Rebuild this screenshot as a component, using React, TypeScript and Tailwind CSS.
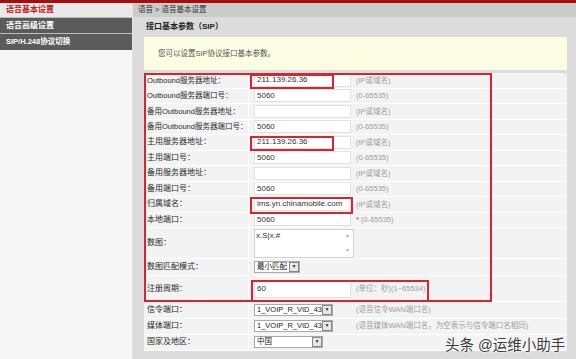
import React from "react";

type Row = {
    label: string;
    value?: string;
    hint?: React.ReactNode;
    kind?: "input" | "textarea" | "select" | "period";
    selectText?: string;
    selectW?: string;
    h: string;
};

const ROWS: Row[] = [
    { label: "Outbound服务器地址：", value: "211.139.26.36", hint: "(IP或域名)", h: "h-[15.5px]" },
    { label: "Outbound服务器端口号：", value: "5060", hint: "(0-65535)", h: "h-[15.5px]" },
    { label: "备用Outbound服务器地址：", value: "", hint: "(IP或域名)", h: "h-[15.5px]" },
    { label: "备用Outbound服务器端口号：", value: "5060", hint: "(0-65535)", h: "h-[15.5px]" },
    { label: "主用服务器地址：", value: "211.139.26.36", hint: "(IP或域名)", h: "h-[15.5px]" },
    { label: "主用端口号：", value: "5060", hint: "(0-65535)", h: "h-[15.5px]" },
    { label: "备用服务器地址：", value: "", hint: "(IP或域名)", h: "h-[15.5px]" },
    { label: "备用端口号：", value: "5060", hint: "(0-65535)", h: "h-[15.5px]" },
    { label: "归属域名：", value: "ims.yn.chinamobile.com", hint: "(IP或域名)", h: "h-[15.5px]" },
    {
        label: "本地端口：",
        value: "5060",
        hint: (
            <>
                <span className="text-[#d33]">*</span> (0-65535)
            </>
        ),
        h: "h-[15.5px]",
    },
    { label: "数图：", kind: "textarea", h: "h-[31px]" },
    { label: "数图匹配模式：", kind: "select", selectText: "最小匹配", selectW: "w-[46px]", h: "h-[17px]" },
    { label: "注册周期：", kind: "period", value: "60", hint: "(单位：秒)(1~65534)", h: "h-[26px]" },
    { label: "信令端口：", kind: "select", selectText: "1_VOIP_R_VID_43", selectW: "w-[79px]", hint: "(语音信令WAN端口名)", h: "h-[16.5px]" },
    {
        label: "媒体端口：",
        kind: "select",
        selectText: "1_VOIP_R_VID_43",
        selectW: "w-[79px]",
        hint: "(语音媒体WAN端口名，为空表示与信令端口名相同)",
        h: "h-[16px]",
    },
    { label: "国家及地区：", kind: "select", selectText: "中国", selectW: "w-[69px]", h: "h-[16px]" },
];

function Select({ text, w }: { text: string; w: string }) {
    return (
        <div className={`${w} h-[12px] bg-white border border-[#a9a9a9] flex items-center justify-between pl-[2px]`}>
            <span className="text-[7.5px] leading-none text-[#222]">{text}</span>
            <span className="w-[10px] h-[10px] border border-[#888] bg-[#e8e8e8] flex items-center justify-center text-[5px] text-[#333]">
                ▼
            </span>
        </div>
    );
}

function Cell({ row }: { row: Row }) {
    if (row.kind === "textarea") {
        return (
            <div className="w-[213px] h-[29px] bg-white border border-[#d0d0d0] relative">
                <span className="absolute left-[1px] top-[0px] text-[8px] leading-[11px] text-[#333]">x.S|x.#</span>
                <span className="absolute right-[3px] top-[2px] text-[5px] text-[#aaa]">▲</span>
                <span className="absolute right-[3px] bottom-[2px] text-[5px] text-[#aaa]">▼</span>
            </div>
        );
    }
    if (row.kind === "select") return <Select text={row.selectText!} w={row.selectW!} />;
    return (
        <div
            className={`w-[97px] ${row.kind === "period" ? "h-[18px]" : "h-[13px]"} bg-white border border-[#e2e2e2] flex items-center pl-[2px]`}
        >
            <span className="text-[8px] leading-none text-[#333]">{row.value}</span>
        </div>
    );
}

export default function App() {
    return (
        <div
            className="w-[576px] h-[359px] overflow-hidden bg-[#dadada] relative"
            style={{ fontFamily: '"Liberation Sans", "Noto Sans CJK SC", sans-serif' }}
        >
            <div className="h-[3px] bg-[#a80d0d]" />
            <div className="flex h-[356px]">
                {/* Sidebar */}
                <aside className="w-[133px] bg-[#f6f6f6] border-r border-[#e4e4e4] flex flex-col">
                    <div className="h-[14px] bg-[#e9e9e9] pl-[6px] flex items-center text-[8px] font-bold text-[#c4161c]">
                        语音基本设置
                    </div>
                    <div className="h-[16px] bg-[#5b5b5b] border-t border-[#bdbdbd] pl-[6px] flex items-center text-[8px] font-bold text-white">
                        语音高级设置
                    </div>
                    <div className="h-[17px] bg-[#5b5b5b] border-t border-[#bdbdbd] pl-[6px] flex items-center text-[7.5px] font-bold text-white">
                        SIP/H.248协议切换
                    </div>
                </aside>

                {/* Main */}
                <main className="flex-1 flex flex-col bg-[#dcdcdc]">
                    <div className="h-[14px] bg-[#cbcbcb] pl-[5px] flex items-center text-[7.5px] text-[#333]">
                        语音 &gt; 语音基本设置
                    </div>
                    <div className="pl-[11px] pr-[9px]">
                        <div className="h-[20px] flex items-center pl-[2px] text-[8px] font-bold text-[#222]">
                            接口基本参数（SIP）
                        </div>
                        <div className="h-[33px] bg-[#fbfde3] flex items-center pl-[14px] text-[7.5px] text-[#555]">
                            您可以设置SIP协议接口基本参数。
                        </div>

                        <div className="mt-[3px] relative">
                            {ROWS.map((row) => (
                                <div key={row.label} className={`${row.h} flex border-b border-white`}>
                                    <div
                                        className={`w-[105px] bg-[#f3f3f3] border-r border-white pl-[3px] flex items-center ${
                                            row.label.includes("Outbound") ? "text-[7.5px]" : "text-[8px]"
                                        } text-[#2a2a2a] whitespace-nowrap`}
                                    >
                                        {row.label}
                                    </div>
                                    <div className="flex-1 bg-[#f3f3f3] pl-[5px] flex items-center gap-[2px] whitespace-nowrap">
                                        <div className="w-[100px] flex items-center shrink-0">
                                            <Cell row={row} />
                                        </div>
                                        {row.hint && row.kind !== "textarea" && (
                                            <span className="text-[7.5px] text-[#a0a0a0]">{row.hint}</span>
                                        )}
                                    </div>
                                </div>
                            ))}

                            {/* annotation boxes */}
                            <div className="absolute left-0 top-0 w-[348px] h-[229px] border-2 border-[#d6252e] pointer-events-none" />
                            <div className="absolute left-[106px] top-[1px] w-[84px] h-[15px] border-2 border-[#d6252e] pointer-events-none" />
                            <div className="absolute left-[106px] top-[63px] w-[84px] h-[15px] border-2 border-[#d6252e] pointer-events-none" />
                            <div className="absolute left-[106px] top-[124px] w-[103px] h-[17px] border-2 border-[#d6252e] pointer-events-none" />
                            <div className="absolute left-[107px] top-[207px] w-[178px] h-[22px] border-2 border-[#d6252e] pointer-events-none" />
                        </div>
                    </div>
                </main>
            </div>

            {/* watermark */}
            <div
                className="absolute left-[445px] top-[336px] text-[14.5px] leading-[18px] text-[#3a3a3a] whitespace-nowrap"
                style={{ textShadow: "0 0 2px #fff, 0 0 2px #fff" }}
            >
                头条 @运维小助手
            </div>
        </div>
    );
}
